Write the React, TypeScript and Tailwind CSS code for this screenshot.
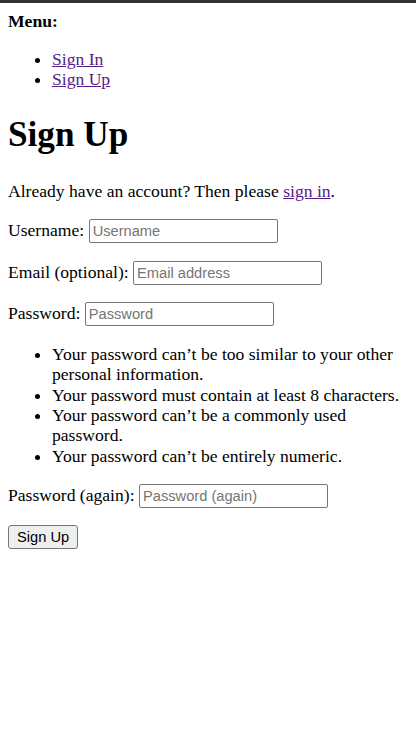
import React from 'react';

const inputCls =
  "inline-block align-baseline w-[189px] h-[24px] px-[3px] border border-[#767676] rounded-[2px] bg-white font-['Liberation_Sans',Arial,sans-serif] text-[14.67px] text-black placeholder:text-[#757575] outline-none";

const rules = [
  'Your password can’t be too similar to your other personal information.',
  'Your password must contain at least 8 characters.',
  'Your password can’t be a commonly used password.',
  'Your password can’t be entirely numeric.',
];

export default function App() {
  return (
    <div className="min-h-[745px] bg-white border-t-[3px] border-[#333333] font-['Liberation_Serif','Times_New_Roman',serif] text-[17.6px] leading-[20.4px] text-black">
      <div className="p-[8px]">
        <strong className="block font-bold">Menu:</strong>
        <ul className="list-disc pl-[44px] my-[17.6px]">
          <li>
            <a href="#" className="text-[#551A8B] underline">Sign In</a>
          </li>
          <li>
            <a href="#" className="text-[#551A8B] underline">Sign Up</a>
          </li>
        </ul>

        <h1 className="text-[35.2px] leading-[44px] font-bold my-[23.6px]">Sign Up</h1>

        <p className="my-[17.6px]">
          Already have an account? Then please{' '}
          <a href="#" className="text-[#551A8B] underline">sign in</a>.
        </p>

        <form>
          <p className="my-[17.6px]">
            <label>Username:</label>{' '}
            <input type="text" placeholder="Username" className={inputCls} />
          </p>
          <p className="my-[17.6px]">
            <label>Email (optional):</label>{' '}
            <input type="email" placeholder="Email address" className={inputCls} />
          </p>
          <p className="my-[17.6px]">
            <label>Password:</label>{' '}
            <input type="password" placeholder="Password" className={inputCls} />
          </p>
          <ul className="list-disc pl-[44px] my-[17.6px]">
            {rules.map((r) => (
              <li key={r}>{r}</li>
            ))}
          </ul>
          <p className="my-[17.6px]">
            <label>Password (again):</label>{' '}
            <input type="password" placeholder="Password (again)" className={inputCls} />
          </p>
          <button
            type="button"
            className="inline-block h-[24px] px-[8px] border border-[#767676] rounded-[3px] bg-[#efefef] font-['Liberation_Sans',Arial,sans-serif] text-[14.67px] leading-none text-black"
          >
            Sign Up
          </button>
        </form>
      </div>
    </div>
  );
}
